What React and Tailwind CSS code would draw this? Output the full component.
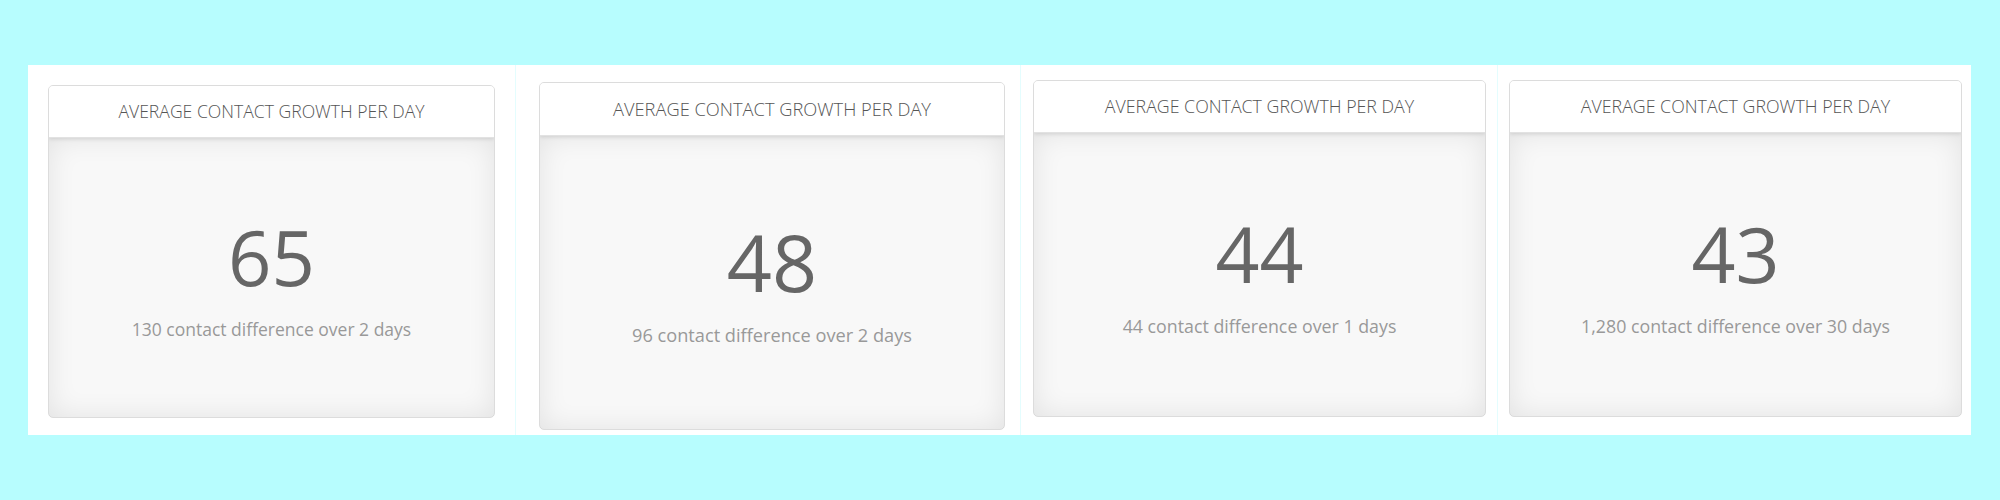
import React from "react";

const cards = [
  {
    value: "65",
    note: "130 contact difference over 2 days",
    col: "w-[487px] pl-[20px] pt-[20px]",
    box: "w-[447px] h-[333px]",
    head: "h-[52px] text-[17.6px]",
    num: "text-[76px]",
    sub: "text-[17.5px]",
  },
  {
    value: "48",
    note: "96 contact difference over 2 days",
    col: "w-[505px] pl-[23px] pt-[17px] border-l border-[#e4fdfe]",
    box: "w-[466px] h-[348px]",
    head: "h-[53px] text-[18.3px]",
    num: "text-[79px]",
    sub: "text-[18.2px]",
  },
  {
    value: "44",
    note: "44 contact difference over 1 days",
    col: "w-[477px] pl-[12px] pt-[15px] border-l border-[#e4fdfe]",
    box: "w-[453px] h-[337px]",
    head: "h-[52px] text-[17.8px]",
    num: "text-[77px]",
    sub: "text-[17.8px]",
  },
  {
    value: "43",
    note: "1,280 contact difference over 30 days",
    col: "w-[474px] pl-[11px] pt-[15px] border-l border-[#e4fdfe]",
    box: "w-[453px] h-[337px]",
    head: "h-[52px] text-[17.8px]",
    num: "text-[77px]",
    sub: "text-[17.8px]",
  },
];

function StatCard({ card }) {
  return (
    <div className={card.col}>
      <div
        className={`${card.box} flex flex-col rounded-[5px] border border-[#dcdcdc] bg-[#f8f8f8] overflow-hidden`}
      >
        {/* header */}
        <div
          className={`${card.head} relative z-10 flex shrink-0 items-center justify-center bg-white font-light uppercase text-[#555] shadow-[0_1px_4px_rgba(0,0,0,0.12)] border-b border-[#e2e2e2]`}
        >
          Average Contact Growth Per Day
        </div>
        {/* body */}
        <div className="flex flex-1 flex-col items-center justify-center pt-[6px] shadow-[inset_0_0_28px_rgba(0,0,0,0.09)]">
          <div className={`${card.num} leading-none text-[#666]`}>{card.value}</div>
          <div className={`${card.sub} mt-[21px] leading-[1.5] text-[#999]`}>{card.note}</div>
        </div>
      </div>
    </div>
  );
}

export default function App() {
  return (
    <div className="h-[500px] w-[2000px] bg-[#b7fdfe] pl-[28px] pt-[65px] font-['Open_Sans',sans-serif]">
      <div className="flex h-[370px] w-[1943px] bg-white">
        {cards.map((c) => (
          <StatCard key={c.value} card={c} />
        ))}
      </div>
    </div>
  );
}
